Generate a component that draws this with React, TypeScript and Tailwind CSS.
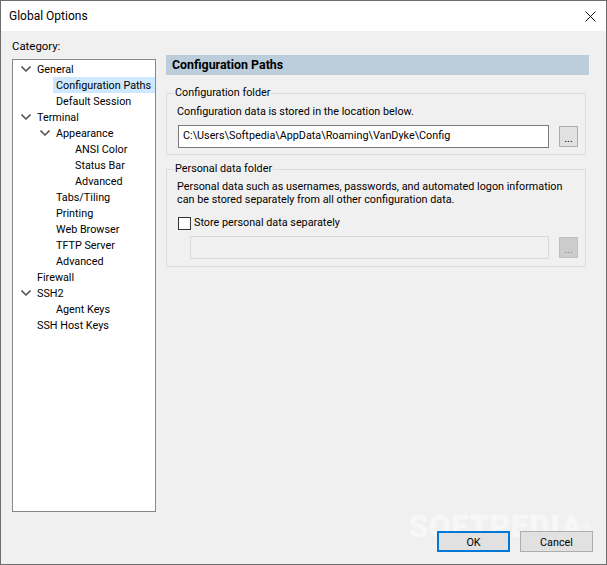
const font = "font-['Roboto',sans-serif]";

type Node = { label: string; level: number; open?: boolean; selected?: boolean };

const tree: Node[] = [
  { label: 'General', level: 0, open: true },
  { label: 'Configuration Paths', level: 1, selected: true },
  { label: 'Default Session', level: 1 },
  { label: 'Terminal', level: 0, open: true },
  { label: 'Appearance', level: 1, open: true },
  { label: 'ANSI Color', level: 2 },
  { label: 'Status Bar', level: 2 },
  { label: 'Advanced', level: 2 },
  { label: 'Tabs/Tiling', level: 1 },
  { label: 'Printing', level: 1 },
  { label: 'Web Browser', level: 1 },
  { label: 'TFTP Server', level: 1 },
  { label: 'Advanced', level: 1 },
  { label: 'Firewall', level: 0 },
  { label: 'SSH2', level: 0, open: true },
  { label: 'Agent Keys', level: 1 },
  { label: 'SSH Host Keys', level: 0 },
];

const indent = ['pl-[24px]', 'pl-[43px]', 'pl-[62px]'];
const chevronIndent = ['ml-[8px]', 'ml-[27px]', 'ml-[46px]'];

function Chevron({ level }: { level: number }) {
  return (
    <svg width="10" height="6" viewBox="0 0 10 6" className={`absolute top-[5px] left-0 ${chevronIndent[level]}`}>
      <path d="M0.5 0.5 L5 5 L9.5 0.5" fill="none" stroke="#595959" strokeWidth="1.6" />
    </svg>
  );
}

function TreeRow({ node }: { node: Node }) {
  return (
    <div className={`relative h-4 whitespace-nowrap ${indent[node.level]}`}>
      {node.open && <Chevron level={node.level} />}
      <span className={`block -ml-[3px] pl-[3px] h-4 leading-[18px] ${node.selected ? 'bg-[#cde8ff]' : ''}`}>{node.label}</span>
    </div>
  );
}

function EllipsisButton({ disabled }: { disabled?: boolean }) {
  return (
    <button
      className={`w-[19px] h-[21px] mt-[1px] ml-[10px] shrink-0 border leading-[24px] text-center text-[11px] ${
        disabled ? 'bg-[#cccccc] border-[#bfbfbf] text-[#8a8a8a]' : 'bg-[#e1e1e1] border-[#adadad] text-black'
      }`}
    >
      ...
    </button>
  );
}

export default function App() {
  return (
    <div className={`${font} relative w-[607px] h-[565px] flex flex-col overflow-hidden bg-[#f0f0f0] border border-[#6d6d6d] text-[10.8px] text-black`}>
      <div className="h-[30px] shrink-0 bg-white flex items-center justify-between pl-[8px] pr-[10px]">
        <span className="text-[12px]">Global Options</span>
        <svg width="11" height="11" viewBox="0 0 11 11">
          <path d="M0.5 0.5 L10.5 10.5 M10.5 0.5 L0.5 10.5" stroke="#111" strokeWidth="1" />
        </svg>
      </div>

      <div className="flex flex-1 pl-[11px] pr-[17px]">
        <div className="w-[144px] shrink-0 pt-[7px]">
          <div className="h-[21px] leading-4 text-[11.4px]">Category:</div>
          <div className="w-[144px] h-[453px] bg-white border border-[#828790] pt-[1px]">
            {tree.map((n, i) => (
              <TreeRow key={i} node={n} />
            ))}
          </div>
        </div>

        <div className="flex-1 min-w-0 ml-[10px] pt-[24px]">
          <div className="h-[20px] bg-[#bccddc] pl-[6px] leading-[20px] font-bold text-[12.4px]">Configuration Paths</div>

          <fieldset className="mt-[11px] mr-[3px] h-[69px] border border-[#dcdcdc] pl-[7px] pr-[7px]">
            <legend className="px-[1px] leading-[14px]">Configuration folder</legend>
            <div className="leading-4 mt-[4px] ml-[3px]">Configuration data is stored in the location below.</div>
            <div className="flex mt-[5px] ml-[4px]">
              <div className="flex-1 h-[23px] bg-white border border-[#7a7a7a] pl-[4px] leading-[20px]">
                {'C:\\Users\\Softpedia\\AppData\\Roaming\\VanDyke\\Config'}
              </div>
              <EllipsisButton />
            </div>
          </fieldset>

          <fieldset className="mt-[7px] mr-[3px] h-[105px] border border-[#dcdcdc] pl-[7px] pr-[7px]">
            <legend className="px-[1px] leading-[14px]">Personal data folder</legend>
            <div className="leading-[13px] mt-[4px] ml-[3px] whitespace-nowrap">
              Personal data such as usernames, passwords, and automated logon information
              <br />
              can be stored separately from all other configuration data.
            </div>
            <label className="flex items-center mt-[9px] ml-[4px] h-4">
              <span className="w-[13px] h-[13px] bg-white border border-[#333333] mr-[3px]" />
              Store personal data separately
            </label>
            <div className="flex mt-[5px] pl-[16px]">
              <div className="flex-1 h-[23px] bg-[#f0f0f0] border border-[#d9d9d9]" />
              <EllipsisButton disabled />
            </div>
          </fieldset>
        </div>
      </div>

      <div className="absolute left-[408px] top-[514px] leading-[24px] text-[31px] font-bold text-white opacity-50 tracking-[1px] select-none whitespace-nowrap [text-shadow:0_0_3px_#ffffff]">
        SOFTPEDIA<sup className="text-[10px] font-normal">®</sup>
      </div>

      <div className="relative flex justify-end gap-[10px] pr-[13px] pb-[12px] pt-[19px]">
        <button className="w-[73px] h-[21px] bg-[#e1e1e1] border-2 border-[#0078d7] leading-[19px] text-center">OK</button>
        <button className="w-[73px] h-[21px] bg-[#e1e1e1] border border-[#adadad] leading-[21px] text-center">Cancel</button>
      </div>
    </div>
  );
}
